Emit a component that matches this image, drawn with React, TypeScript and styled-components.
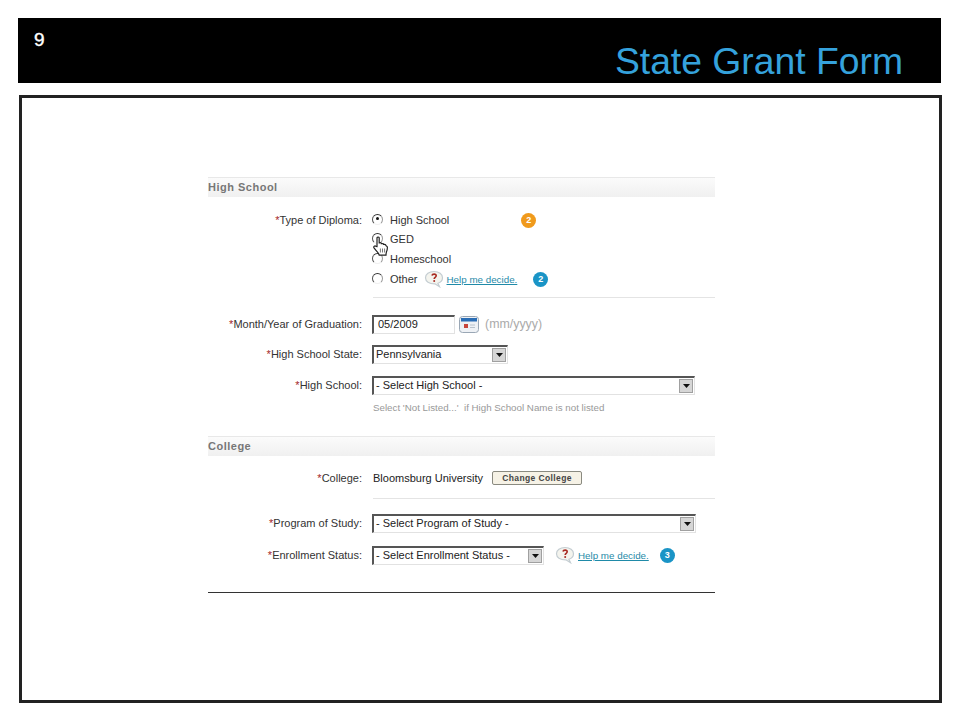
import React from "react";
import styled, { createGlobalStyle } from "styled-components";

const GlobalStyle = createGlobalStyle`
  html, body {
    margin: 0;
    padding: 0;
    background: #fff;
    font-family: "Liberation Sans", Arial, sans-serif;
  }
`;

function Req({ children }: { children: React.ReactNode }) {
  return (
    <Label>
      <Star>*</Star>
      {children}
    </Label>
  );
}

function Help({ badge, gap, offset }: { badge: number; gap: number; offset: number }) {
  return (
    <>
      <HelpSvg $gap={gap} width="20" height="18" viewBox="0 0 20 18">
        <path
          d="M10 1.500c5 0 8.500 2.600 8.500 6.200 0 2.600-1.800 4.600-4.600 5.600l1.600 3.400-4.600-2.900C5 13.900 1.500 11.400 1.500 7.700 1.500 4.100 5 1.500 10 1.500z"
          fill="#f4f4ee"
          stroke="#c4cdd2"
          strokeWidth="1.200"
        />
        <path
          d="M7.900 5.600c.3-1 1.100-1.500 2.200-1.500 1.300 0 2.100.7 2.100 1.700 0 1.500-2 1.600-2 3.100"
          fill="none"
          stroke="#a82a22"
          strokeWidth="1.600"
        />
        <circle cx="10.200" cy="11" r="1" fill="#a82a22" />
      </HelpSvg>
      <HelpLink href="#">Help me decide.</HelpLink>
      <Badge $color="#1a94c6" $offset={offset}>
        {badge}
      </Badge>
    </>
  );
}

function Select({ width, text }: { width: number; text: string }) {
  return (
    <SelectBox $width={width}>
      <SelectText>{text}</SelectText>
      <SelectArrow>
        <svg width="7" height="4" viewBox="0 0 7 4">
          <path d="M0 0h7L3.500 4z" fill="#111" />
        </svg>
      </SelectArrow>
    </SelectBox>
  );
}

export default function App() {
  return (
    <Page>
      <GlobalStyle />
      <Header>
        <SlideNumber>9</SlideNumber>
        <Title>State Grant Form</Title>
      </Header>
      <Frame>
        <Form>
          <SectionHead>High School</SectionHead>

          <DiplomaRow>
            <Req>Type of Diploma:</Req>
            <RadioList>
              <RadioRow>
                <Radio $checked />
                <RadioLabel>High School</RadioLabel>
                <Badge $color="#f09a1c" $offset={72}>
                  2
                </Badge>
              </RadioRow>
              <RadioRow>
                <Radio />
                <RadioLabel>GED</RadioLabel>
                <Hand width="16" height="22" viewBox="0 0 16 21">
                  <path
                    d="M4 11V2.400C4 1.200 6.200 1.200 6.200 2.400V8c0-1.200 2.200-1.200 2.200 0v.8c0-1.100 2.200-1.100 2.200 0v.8c0-1 2.200-1 2.200.2 0 1 1.600.4 1.600 2.200 0 2-.5 3.400-1 4.600-.3.9-.4 2-.4 3H6.200c-.2-1.300-.8-2-1.700-3C3.200 15.200 1.800 13.500 1 12.400c-.9-1.400.9-2.700 2-1.500z"
                    fill="#fff"
                    stroke="#222"
                    strokeWidth="1.200"
                  />
                  <path d="M7.400 13v4M9.500 13v4M11.600 13v4" stroke="#555" strokeWidth=".8" />
                </Hand>
              </RadioRow>
              <RadioRow>
                <Radio />
                <RadioLabel>Homeschool</RadioLabel>
              </RadioRow>
              <RadioRow>
                <Radio />
                <RadioLabel>Other</RadioLabel>
                <Help badge={2} gap={6} offset={16} />
              </RadioRow>
            </RadioList>
          </DiplomaRow>
          <Divider />

          <Row $top={16}>
            <Req>Month/Year of Graduation:</Req>
            <DateInput>05/2009</DateInput>
            <svg width="20" height="17" viewBox="0 0 20 17">
              <rect x=".5" y=".5" width="19" height="16" rx="3" fill="#eef1f5" stroke="#9aa7b5" />
              <rect x="2" y="2" width="16" height="3.500" fill="#2a6db5" />
              <rect x="5" y="8" width="4" height="4" fill="#c8453c" />
              <path d="M11 9h5M11 11.500h5" stroke="#b8c2cc" />
            </svg>
            <Format>(mm/yyyy)</Format>
          </Row>
          <Row $top={10}>
            <Req>High School State:</Req>
            <Select width={136} text="Pennsylvania" />
          </Row>
          <Row $top={11}>
            <Req>High School:</Req>
            <Select width={323} text="- Select High School -" />
          </Row>
          <Hint>Select 'Not Listed...'&nbsp; if High School Name is not listed</Hint>

          <SectionHead $top={22}>College</SectionHead>

          <Row $top={12}>
            <Req>College:</Req>
            <Value>Bloomsburg University</Value>
            <ChangeButton>Change College</ChangeButton>
          </Row>
          <Divider $top={10} />

          <Row $top={14}>
            <Req>Program of Study:</Req>
            <Select width={324} text="- Select Program of Study -" />
          </Row>
          <Row $top={12}>
            <Req>Enrollment Status:</Req>
            <Select width={172} text="- Select Enrollment Status -" />
            <Help badge={3} gap={11} offset={11} />
          </Row>
          <FormEnd />
        </Form>
      </Frame>
    </Page>
  );
}

const Page = styled.div`
  width: 960px;
  height: 720px;
  padding: 18px 18px 0;
  box-sizing: border-box;
  overflow: hidden;
`;

const Header = styled.header`
  height: 65px;
  width: 923px;
  background: #000;
  display: flex;
  justify-content: space-between;
  align-items: flex-start;
  box-sizing: border-box;
  padding: 12px 38px 0 16px;
`;

const SlideNumber = styled.div`
  color: #fff;
  font-size: 19px;
  line-height: 20px;
  -webkit-text-stroke: 0.4px #fff;
`;

const Title = styled.h1`
  margin: 10px 0 0;
  color: #35a2dc;
  font-size: 37.3px;
  line-height: 42px;
  font-weight: 400;
`;

const Frame = styled.div`
  margin: 12px 0 0 1px;
  width: 923px;
  height: 608px;
  box-sizing: border-box;
  border: 3px solid #222;
  padding: 79px 0 0 186px;
`;

const Form = styled.div`
  width: 507px;
  color: #333;
  font-size: 11px;
`;

const SectionHead = styled.div<{ $top?: number }>`
  margin-top: ${(p) => p.$top ?? 0}px;
  height: 19px;
  line-height: 19px;
  background: linear-gradient(#fbfbfb, #f0f0f0);
  border-top: 1px solid #e8e8e8;
  color: #777;
  font-size: 11px;
  font-weight: 700;
  letter-spacing: 0.5px;
`;

const Row = styled.div<{ $top?: number }>`
  margin-top: ${(p) => p.$top ?? 0}px;
  min-height: 19px;
  display: flex;
  align-items: center;
`;

const DiplomaRow = styled.div`
  margin-top: 13px;
  display: flex;
  align-items: flex-start;
`;

const Label = styled.div`
  width: 154px;
  margin-right: 10px;
  flex-shrink: 0;
  text-align: right;
  line-height: 20px;
  color: #333;
  font-size: 11px;
`;

const Star = styled.span`
  color: #a3262a;
`;

const RadioList = styled.div`
  display: flex;
  flex-direction: column;
`;

const RadioRow = styled.div`
  position: relative;
  height: 20px;
  display: flex;
  align-items: center;

  &:nth-child(2) {
    margin-top: -1px;
  }
`;

const Radio = styled.span<{ $checked?: boolean }>`
  position: relative;
  width: 11px;
  height: 11px;
  margin-top: -2px;
  box-sizing: border-box;
  border-radius: 50%;
  border: 1.5px solid;
  border-color: #333 #999 #f0f0f0 #555;
  background: #fff;
  flex-shrink: 0;

  &::after {
    content: "";
    display: ${(p) => (p.$checked ? "block" : "none")};
    position: absolute;
    left: 2.500px;
    top: 2.500px;
    width: 3px;
    height: 3px;
    border-radius: 50%;
    background: #111;
  }
`;

const RadioLabel = styled.span`
  margin-left: 7px;
  color: #333;
`;

const Hand = styled.svg`
  position: absolute;
  left: 1px;
  top: 6px;
  z-index: 1;
`;

const Badge = styled.span<{ $color: string; $offset: number }>`
  width: 15px;
  height: 15px;
  margin-left: ${(p) => p.$offset}px;
  border-radius: 50%;
  background: ${(p) => p.$color};
  color: #fff;
  font-size: 9px;
  font-weight: 700;
  line-height: 15px;
  text-align: center;
  flex-shrink: 0;
`;

const HelpSvg = styled.svg<{ $gap: number }>`
  margin-left: ${(p) => p.$gap}px;
  flex-shrink: 0;
`;

const HelpLink = styled.a`
  margin-left: 3px;
  color: #1f8aa8;
  font-size: 9.800px;
  text-decoration: underline;
`;

const Divider = styled.div<{ $top?: number }>`
  margin: ${(p) => p.$top ?? 8}px 0 0 165px;
  height: 1px;
  background: #e4e4e4;
`;

const DateInput = styled.div`
  width: 83px;
  height: 19px;
  box-sizing: border-box;
  padding-left: 4px;
  line-height: 15px;
  border: 1px solid #e2e2e2;
  border-top: 2px solid #555;
  border-left: 2px solid #555;
  color: #222;
  margin-right: 4px;
`;

const Format = styled.span`
  margin-left: 6px;
  color: #aaa;
  font-size: 12.400px;
`;

const SelectBox = styled.div<{ $width: number }>`
  width: ${(p) => p.$width}px;
  height: 19px;
  box-sizing: border-box;
  display: flex;
  align-items: center;
  border: 1px solid #e2e2e2;
  border-top: 2px solid #555;
  border-left: 2px solid #555;
  flex-shrink: 0;
`;

const SelectText = styled.span`
  flex: 1;
  padding-left: 2px;
  line-height: 14px;
  margin-top: -2px;
  color: #222;
  white-space: nowrap;
  overflow: hidden;
`;

const SelectArrow = styled.span`
  width: 14px;
  height: 14px;
  margin-right: 1px;
  box-sizing: border-box;
  display: flex;
  align-items: center;
  justify-content: center;
  background: #d6d6d6;
  border: 1px solid #a0a0a0;
`;

const Hint = styled.div`
  margin: 6px 0 0 165px;
  color: #999;
  font-size: 9.750px;
  line-height: 13px;
`;

const Value = styled.span`
  margin-left: 1px;
  color: #222;
`;

const ChangeButton = styled.button`
  margin-left: 9px;
  width: 90px;
  height: 14px;
  padding: 0;
  font-family: inherit;
  font-size: 8.500px;
  font-weight: 700;
  letter-spacing: 0.4px;
  line-height: 12px;
  color: #444;
  background: #f6f2e6;
  border: 1px solid #8a8a80;
  border-radius: 2px;
`;

const FormEnd = styled.div`
  margin-top: 27px;
  height: 1px;
  background: #333;
`;
